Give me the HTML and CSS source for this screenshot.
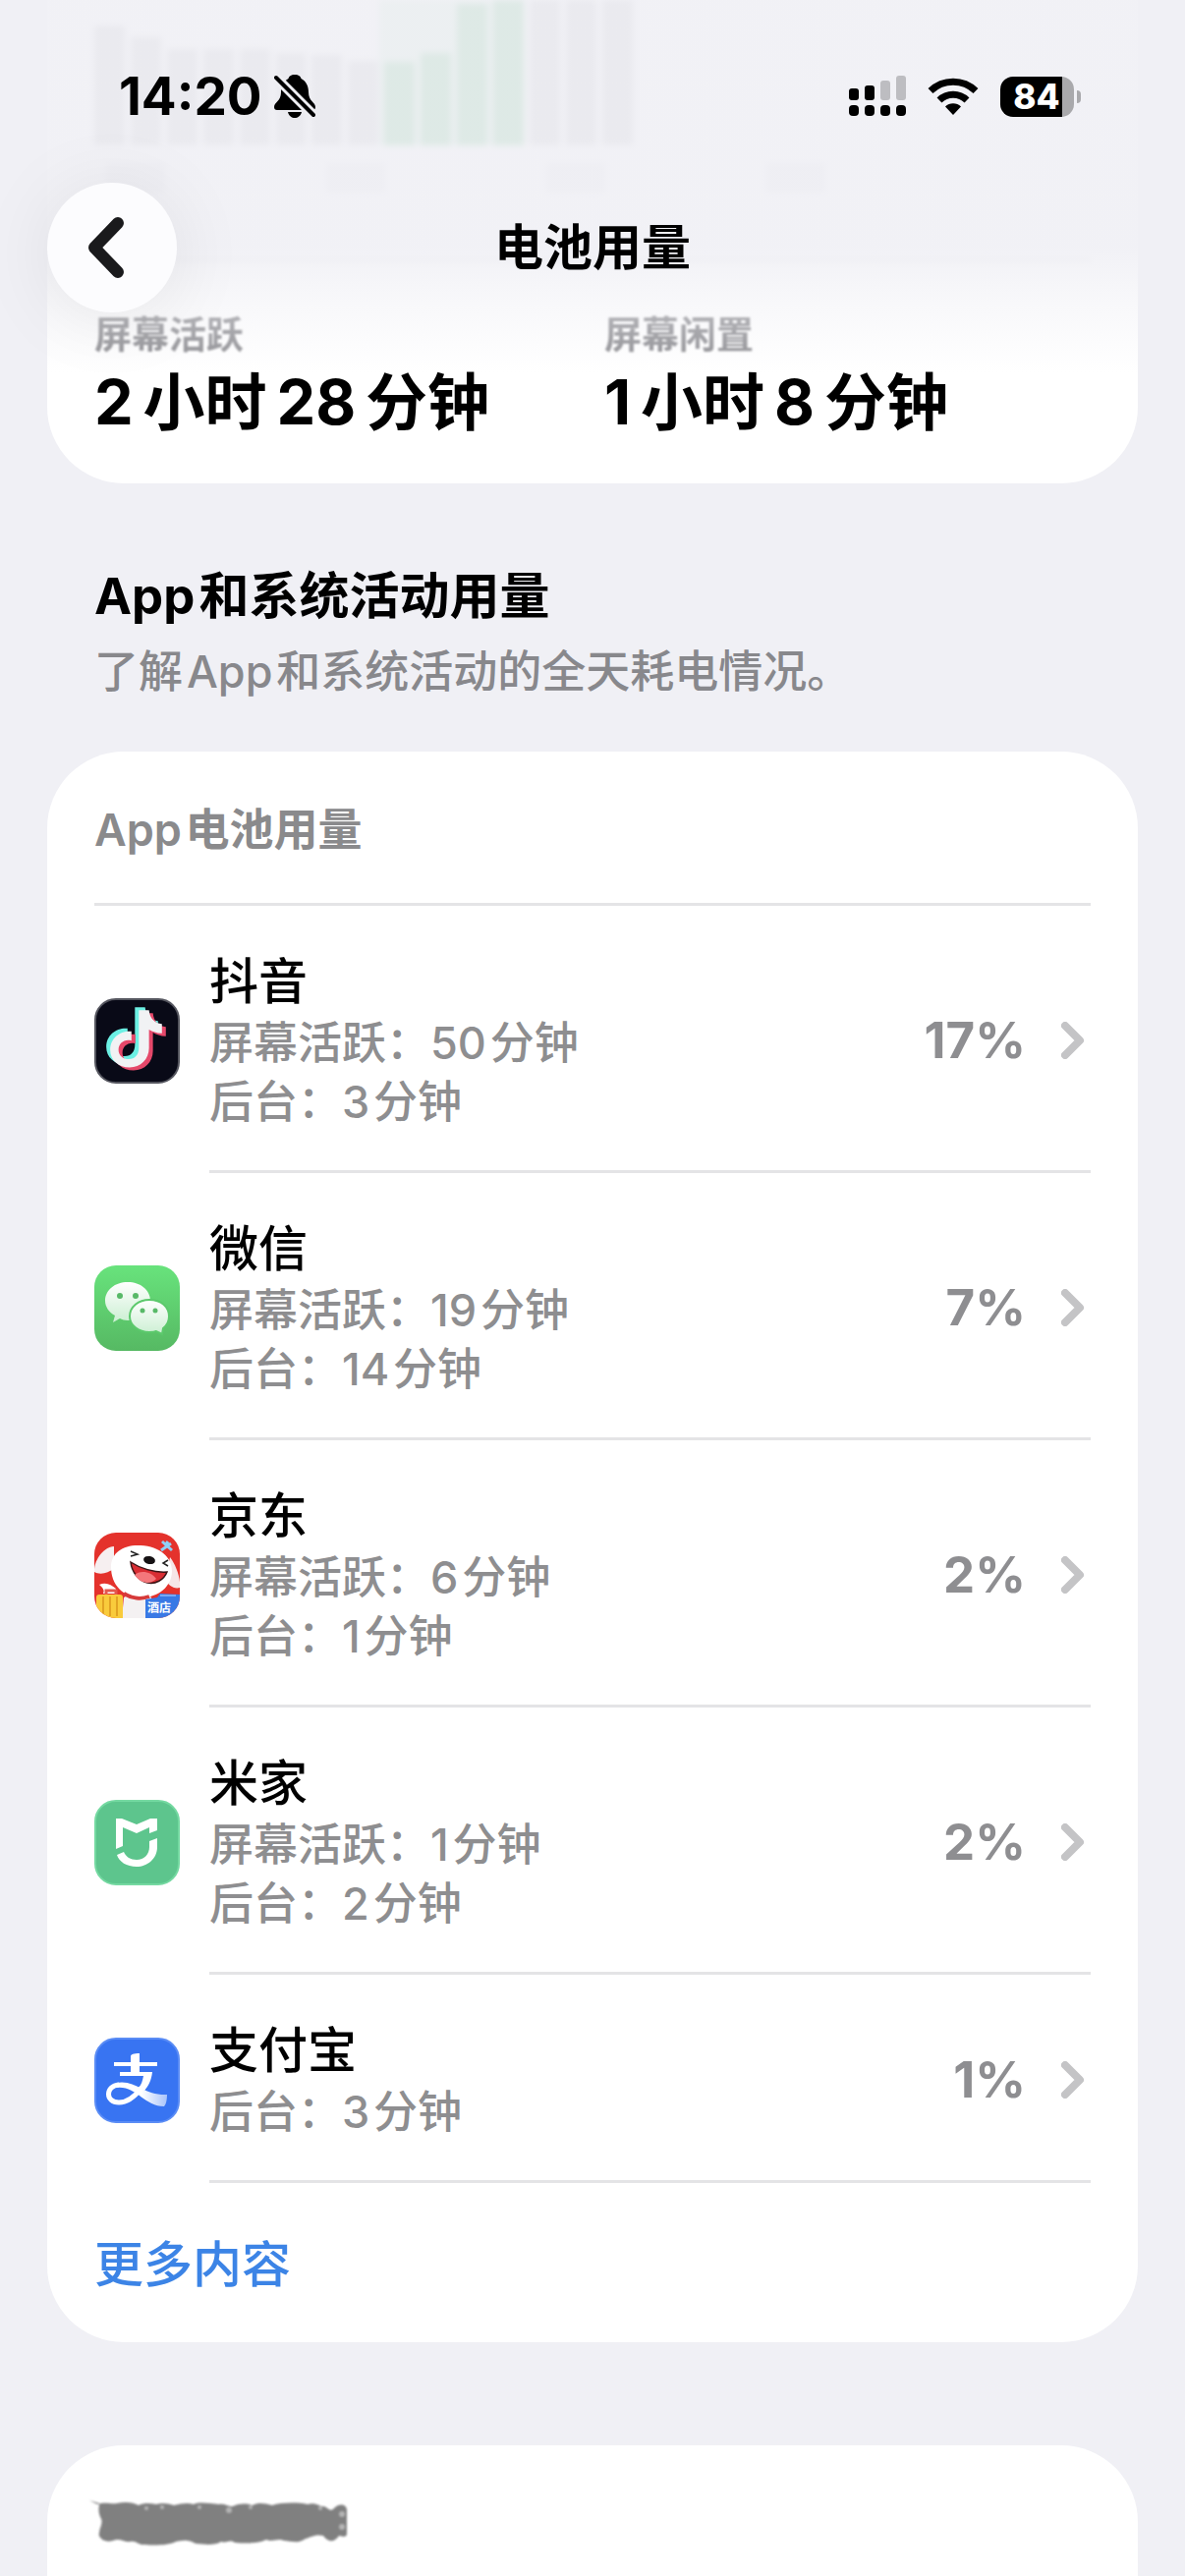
FILE: index.html
```html
<!DOCTYPE html>
<html lang="zh-CN">
<head>
    <meta charset="UTF-8">
    <meta name="viewport" content="width=device-width, initial-scale=1.0">
    <title>电池用量</title>
    <link rel="stylesheet" href="styles.css">
</head>
<body>
    <header class="top-bar">
        <div class="status-bar">
            <div class="status-left">
                <span class="clock">14:20</span>
                <svg class="bell" width="42" height="44" viewBox="0 0 42 44">
                    <path d="M21 0c-4 0-6 2-6.500 4C9 7 7 12 7 18c0 9-7 10-7 15 0 2 1 3 3 3h36c2 0 3-1 3-3 0-5-7-6-7-15 0-6-2-11-7.500-14C27 2 25 0 21 0zM14 38h14c-1 4-4 6-7 6s-6-2-7-6z"/>
                    <path d="M2 3l38 38" stroke="#efeff3" stroke-width="10"/>
                    <path d="M2 3l38 38" stroke="#000" stroke-width="4" stroke-linecap="round"/>
                </svg>
            </div>
            <div class="status-right">
                <svg width="58" height="42" viewBox="0 0 58 42">
                    <g fill="#bdbdc1">
                        <rect x="32" y="5" width="10" height="20" rx="3"/>
                        <rect x="48" y="0" width="10" height="25" rx="3"/>
                    </g>
                    <rect x="0" y="13" width="10" height="12" rx="3"/>
                    <rect x="16" y="10" width="10" height="15" rx="3"/>
                    <rect x="0" y="30" width="10" height="11" rx="4"/>
                    <rect x="16" y="30" width="10" height="11" rx="4"/>
                    <rect x="32" y="30" width="10" height="11" rx="4"/>
                    <rect x="48" y="30" width="10" height="11" rx="4"/>
                </svg>
                <svg width="52" height="38" viewBox="0 0 52 38">
                    <g fill="none" stroke="#000" stroke-width="7">
                        <path d="M3 13.500a33 33 0 0 1 46 0"/>
                        <path d="M12 23a20 20 0 0 1 28 0"/>
                    </g>
                    <path d="M26 38l-8-8.500a11.500 11.500 0 0 1 16 0z"/>
                </svg>
                <div class="battery"><span class="battery-level">84</span></div>
            </div>
        </div>
        <div class="nav">
            <button class="back" type="button" aria-label="返回">
                <svg width="38" height="62" viewBox="0 0 38 62" fill="none" stroke="#1a1a1c" stroke-width="12" stroke-linecap="round" stroke-linejoin="round">
                    <path d="M31 6L7 31l24 25"/>
                </svg>
            </button>
            <h1 class="nav-title">电池用量</h1>
        </div>
    </header>

    <main class="page">
        <section class="card summary">
            <div class="chart">
                <div class="bars">
                    <i style="height: 122px"></i>
                    <i style="height: 110px"></i>
                    <i style="height: 98px"></i>
                    <i style="height: 98px"></i>
                    <i style="height: 98px"></i>
                    <i style="height: 94px"></i>
                    <i style="height: 92px"></i>
                    <i style="height: 86px"></i>
                    <i class="on" style="height: 85px"></i>
                    <i class="on" style="height: 94px"></i>
                    <i class="on" style="height: 144px"></i>
                    <i class="on" style="height: 148px"></i>
                    <i style="height: 148px"></i>
                    <i style="height: 148px"></i>
                    <i style="height: 148px"></i>
                </div>
                <div class="ticks"><b></b><b></b><b></b><b></b></div>
            </div>
            <dl class="stats">
                <div>
                    <dt>屏幕活跃</dt>
                    <dd>2&thinsp;小时&thinsp;28&thinsp;分钟</dd>
                </div>
                <div>
                    <dt>屏幕闲置</dt>
                    <dd>1&thinsp;小时&thinsp;8&thinsp;分钟</dd>
                </div>
            </dl>
        </section>

        <div class="section-head">
            <h2>App&hairsp;和系统活动用量</h2>
            <p>了解&hairsp;App&hairsp;和系统活动的全天耗电情况。</p>
        </div>

        <section class="card">
            <h3 class="card-title">App&hairsp;电池用量</h3>
            <ul class="app-list">
                <li>
                    <a class="app" href="#douyin">
                        <svg class="app-icon" viewBox="0 0 87 87">
                            <defs>
                                <path id="note" d="M37 36v10c-8-2-14 3-14 10 0 6 5 10 11 10 7 0 11-5 11-12V13h11c1 9 6 14 14 15v10c-6 0-10-2-14-4v20c0 12-9 21-21 21S14 67 14 56c0-13 11-21 23-20z" transform="translate(3 -1) scale(.94)"/>
                            </defs>
                            <rect x="1" y="1" width="85" height="85" rx="21" fill="#090a17" stroke="#55565f" stroke-width="2"/>
                            <use href="#note" x="-4" y="-2" fill="#6cf0e4"/>
                            <use href="#note" x="4" y="4" fill="#e5486a"/>
                            <use href="#note" y="1" fill="#f1f2f4"/>
                        </svg>
                        <span class="app-info">
                            <span class="app-name">抖音</span>
                            <span class="app-time">屏幕活跃：50&hairsp;分钟</span>
                            <span class="app-time">后台：3&hairsp;分钟</span>
                        </span>
                        <span class="percent">17%</span>
                        <svg class="chevron" viewBox="0 0 24 38"><path d="M4 4l15 15L4 34"/></svg>
                    </a>
                </li>
                <li>
                    <a class="app" href="#wechat">
                        <svg class="app-icon" viewBox="0 0 87 87">
                            <defs>
                                <linearGradient id="green" x2="0" y2="1">
                                    <stop offset="0" stop-color="#68e37c"/>
                                    <stop offset="1" stop-color="#56b963"/>
                                </linearGradient>
                                <linearGradient id="bubble" x2="0" y2="1">
                                    <stop offset="0" stop-color="#ffffff"/>
                                    <stop offset="1" stop-color="#cbefd2"/>
                                </linearGradient>
                            </defs>
                            <rect width="87" height="87" rx="22" fill="url(#green)"/>
                            <path d="M34 17c13 0 23 8 23 19s-10 20-23 20c-3 0-6-1-8-2l-7 4 2-7c-6-3-10-9-10-15 0-11 10-19 23-19z" fill="url(#bubble)"/>
                            <path d="M56 35c12 0 20 7 20 17 0 5-2 9-6 12l-1 6-6-3c-2 1-5 1-7 1-11 0-20-7-20-16 0-10 9-17 20-17z" fill="url(#bubble)" stroke="#5cc96c" stroke-width="2"/>
                            <g fill="#58b968">
                                <circle cx="26" cy="31" r="3"/>
                                <circle cx="42" cy="31" r="3"/>
                                <circle cx="49" cy="46" r="2.500"/>
                                <circle cx="62" cy="46" r="2.500"/>
                            </g>
                        </svg>
                        <span class="app-info">
                            <span class="app-name">微信</span>
                            <span class="app-time">屏幕活跃：19&hairsp;分钟</span>
                            <span class="app-time">后台：14&hairsp;分钟</span>
                        </span>
                        <span class="percent">7%</span>
                        <svg class="chevron" viewBox="0 0 24 38"><path d="M4 4l15 15L4 34"/></svg>
                    </a>
                </li>
                <li>
                    <a class="app" href="#jd">
                        <svg class="app-icon" viewBox="0 0 87 87">
                            <defs>
                                <clipPath id="tile"><rect width="87" height="87" rx="22"/></clipPath>
                            </defs>
                            <g clip-path="url(#tile)">
                                <rect width="87" height="87" fill="#e4322c"/>
                                <path d="M30 66c8-5 22-5 28 0l3 21H28z" fill="#f4f1f2"/>
                                <path d="M20 14C8 15-1 30 0 40c5 3 14 2 20-4z" fill="#f6eff0"/>
                                <path d="M77 25c6 8 11 21 10 31-6 2-13-3-14-9z" fill="#f6e6e7"/>
                                <path d="M17 35c0-15 13-23 30-22 20 1 32 12 32 26 0 16-14 27-31 27-19 0-31-13-31-31z" fill="#fff"/>
                                <path d="M30 62c8 5 18 6 26 3" fill="none" stroke="#d63a3a" stroke-width="4"/>
                                <path d="M37 30c9 6 24 11 37 10-3 8-12 13-20 11-9-2-16-11-17-21z" fill="#d92d33" stroke="#3b1416" stroke-width="1.500"/>
                                <path d="M41 43c5-5 17-4 22 4-7 7-17 4-22-4z" fill="#f4777b"/>
                                <ellipse cx="56" cy="28" rx="6" ry="4" fill="#161214" transform="rotate(12 56 28)"/>
                                <path d="M37 19l7 3-7 2M75 28l-5 3 5 3" fill="none" stroke="#222" stroke-width="1.500"/>
                                <path d="M69 9l10 9M68 18l10-7M72 13l3-4" stroke="#8fd0f7" stroke-width="3"/>
                                <path d="M5 53c7-3 12 0 17 4l-1 5H9c2-4-1-6-4-9z" fill="#fff"/>
                                <path d="M12 64v-5h10v5" fill="none" stroke="#e4574e" stroke-width="3"/>
                                <rect x="2" y="63" width="27" height="26" rx="3" fill="#f9cb3c"/>
                                <path d="M9 65v20M16 65v20M23 65v20" stroke="#e2a324" stroke-width="2"/>
                                <path d="M52 68l12-2 3-4 20 1v24H52z" fill="#3979e5"/>
                                <path d="M67 64h16" stroke="#76a9f5" stroke-width="2"/>
                                <text class="hotel" x="54" y="81">酒店</text>
                            </g>
                        </svg>
                        <span class="app-info">
                            <span class="app-name">京东</span>
                            <span class="app-time">屏幕活跃：6&hairsp;分钟</span>
                            <span class="app-time">后台：1&hairsp;分钟</span>
                        </span>
                        <span class="percent">2%</span>
                        <svg class="chevron" viewBox="0 0 24 38"><path d="M4 4l15 15L4 34"/></svg>
                    </a>
                </li>
                <li>
                    <a class="app" href="#mihome">
                        <svg class="app-icon" viewBox="0 0 87 87">
                            <rect x="1" y="1" width="85" height="85" rx="21" fill="#5dc58d" stroke="#74d9a1" stroke-width="2"/>
                            <path d="M22 19h6l15 6 14-6h7v12l-8 3v-6l-13 6-14-6v19l-7 3z" fill="#fff"/>
                            <path d="M64 39v9c0 12-10 20-21 20-10 0-18-5-20-12l7-3c2 5 7 8 13 8 8 0 13-6 13-13v-6z" fill="#fff"/>
                        </svg>
                        <span class="app-info">
                            <span class="app-name">米家</span>
                            <span class="app-time">屏幕活跃：1&hairsp;分钟</span>
                            <span class="app-time">后台：2&hairsp;分钟</span>
                        </span>
                        <span class="percent">2%</span>
                        <svg class="chevron" viewBox="0 0 24 38"><path d="M4 4l15 15L4 34"/></svg>
                    </a>
                </li>
                <li>
                    <a class="app" href="#alipay">
                        <svg class="app-icon" viewBox="0 0 87 87">
                            <defs>
                                <linearGradient id="tail">
                                    <stop offset="0" stop-color="#fff"/>
                                    <stop offset=".5" stop-color="#fff"/>
                                    <stop offset="1" stop-color="#a9c4fb"/>
                                </linearGradient>
                            </defs>
                            <rect x="1" y="1" width="85" height="85" rx="21" fill="#3874f2" stroke="#5a8cf5" stroke-width="2"/>
                            <path d="M20 25h17v-6c0-2 3-3 9-3v9h18v4H46v6h13c-1 9-4 14-8 19l-6-3c3-3 4-7 5-12H26v-4h11v-6H20z" fill="#fff"/>
                            <path d="M48 51c-6 8-13 15-23 15-14 0-14-17 0-18" fill="none" stroke="#fff" stroke-width="5"/>
                            <path d="M22 46c20-4 28 13 52 12 0 5-1 10-3 12-20 0-29-22-49-19z" fill="url(#tail)"/>
                        </svg>
                        <span class="app-info">
                            <span class="app-name">支付宝</span>
                            <span class="app-time">后台：3&hairsp;分钟</span>
                        </span>
                        <span class="percent">1%</span>
                        <svg class="chevron" viewBox="0 0 24 38"><path d="M4 4l15 15L4 34"/></svg>
                    </a>
                </li>
            </ul>
            <a class="more" href="#more">更多内容</a>
        </section>

        <section class="card next-card">
            <svg class="scribble" width="264" height="52" viewBox="13 0 264 52">
                <path d="M8 2l8 4c8-3 14 0 20-1 9-2 16-1 22 2 6-3 12-2 18-1 6-2 12-1 18 1 8-2 14-3 20-1 6-3 16-1 26 0 6-1 10 3 14 2 8-3 12-3 20-1 6-3 12-2 20 0 10-3 26-3 36-1 6-2 10 0 14 2 6-1 8 6 12 3 6-7 14-5 14 1v24c0 4-5 3-8 2-4 6-10 8-16 0-8-2-14 2-18 3-8 6-16 2-22 2-6-3-12 2-18-1-8 4-20 4-32 3-6-4-8 1-14-1-6 4-16 3-26 2-8-5-14-3-20-2-8 4-22 4-32 3-6 1-8-4-14-3-8 1-10-4-18-1-8 3-16-3-14-8 0-4 4-10 2-14-4-8-2-12-2-16z" fill="#808080"/>
                <g fill="#b5b5b5">
                    <circle cx="66" cy="10" r="2"/>
                    <circle cx="82" cy="9" r="2"/>
                    <circle cx="120" cy="9" r="2"/>
                    <circle cx="150" cy="12" r="3"/>
                    <circle cx="172" cy="9" r="2"/>
                    <circle cx="243" cy="10" r="2"/>
                    <circle cx="265" cy="16" r="3"/>
                    <circle cx="265" cy="29" r="3"/>
                </g>
            </svg>
        </section>
    </main>
</body>
</html>
```
FILE: styles.css
```css
* {
    box-sizing: border-box;
    margin: 0;
    padding: 0;
}

body {
    position: relative;
    height: 100vh;
    overflow: hidden;
    background: #f0f0f5;
    color: #000;
    font-family: Inter, 'Noto Sans CJK SC', sans-serif;
    font-size: 45px;
    line-height: 60px;
}

a {
    color: inherit;
    text-decoration: none;
}

/* 顶部栏，盖在滚动内容上 */
.top-bar {
    position: absolute;
    top: 0;
    left: 0;
    right: 0;
    z-index: 1;
    height: 380px;
    padding: 68px 48px 0;
    background: linear-gradient(rgba(240, 240, 245, 0.92) 66%, rgba(240, 240, 245, 0.5) 80%, rgba(240, 240, 245, 0));
}

.status-bar {
    display: flex;
    justify-content: space-between;
    align-items: center;
    height: 60px;
    padding: 0 65px 0 73px;
}

.status-left,
.status-right {
    display: flex;
    align-items: center;
}

.status-left {
    gap: 12px;
}

.status-right {
    gap: 22px;
}

.clock {
    font-size: 53px;
    font-weight: 700;
}

.battery {
    position: relative;
    width: 75px;
    height: 41px;
    border-radius: 13px;
    background: linear-gradient(to right, #000 84%, #a9a9ac 84%);
}

.battery::after {
    content: '';
    position: absolute;
    top: 14px;
    right: -7px;
    width: 4px;
    height: 13px;
    border-radius: 0 6px 6px 0;
    background: #a9a9ac;
}

.battery-level {
    display: block;
    padding-right: 1px;
    color: #fff;
    font-size: 35px;
    font-weight: 800;
    line-height: 41px;
    text-align: center;
}

.nav {
    display: grid;
    grid-template-columns: 132px 1fr 132px;
    align-items: center;
    margin-top: 58px;
}

.back {
    display: flex;
    justify-content: center;
    align-items: center;
    width: 132px;
    height: 132px;
    padding-right: 12px;
    border: 0;
    border-radius: 50%;
    background: #fcfcfe;
    box-shadow: 0 6px 80px rgba(0, 0, 0, 0.08);
}

.nav-title {
    font-size: 50px;
    font-weight: 700;
    text-align: center;
}

.page {
    display: flex;
    flex-direction: column;
    min-height: 100vh;
    padding: 0 48px;
}

.card {
    padding: 0 48px;
    border-radius: 78px;
    background: #fff;
}

.summary {
    border-radius: 0 0 78px 78px;
    padding-bottom: 39px;
}

/* 图表只露出底部一截 */
.chart {
    height: 266px;
    border-bottom: 3px solid #e4e4e6;
    filter: blur(3px);
}

.bars {
    display: flex;
    align-items: flex-end;
    gap: 6px;
    width: 54%;
    height: 148px;
    background: linear-gradient(to right, transparent 53%, rgba(90, 200, 120, 0.4) 53%, rgba(90, 200, 120, 0.4) 80%, transparent 80%);
}

.bars i {
    flex: 1;
    background: #a4a4a8;
}

.bars .on {
    background: #0a9c34;
}

.ticks {
    display: flex;
    gap: 164px;
    padding: 18px 12px;
}

.ticks b {
    width: 60px;
    height: 30px;
    background: #dcdce0;
}

.stats {
    display: grid;
    grid-template-columns: 1fr 1fr;
    gap: 24px;
    padding-top: 49px;
}

.stats dt {
    color: #8a8a8e;
    font-size: 38px;
    font-weight: 600;
    line-height: 50px;
    filter: blur(1px);
}

.stats dd {
    font-size: 63px;
    font-weight: 700;
    line-height: 88px;
}

.section-head {
    padding: 79px 48px 45px;
    line-height: 72px;
}

.section-head h2 {
    margin-bottom: 5px;
    font-size: 51px;
    font-weight: 700;
}

.section-head p {
    color: #88888c;
    font-weight: 500;
}

.card-title {
    padding: 47px 0 41px;
    border-bottom: 3px solid #e4e4e6;
    color: #8a8a8c;
    font-size: 45px;
    font-weight: 600;
    line-height: 66px;
}

.app-list {
    list-style: none;
}

.app {
    position: relative;
    display: flex;
    align-items: center;
    gap: 30px;
    padding: 44px 0 42px;
}

.app::after {
    content: '';
    position: absolute;
    left: 117px;
    right: 0;
    bottom: 0;
    height: 3px;
    background: #e4e4e6;
}

.app-icon {
    width: 87px;
    height: 87px;
}

.app-info {
    flex: 1;
    display: flex;
    flex-direction: column;
}

.app-name {
    font-size: 50px;
    font-weight: 500;
    line-height: 66px;
}

.app-time {
    color: #8e8e90;
    font-weight: 500;
}

.percent {
    color: #8e8e91;
    font-size: 51px;
    font-weight: 700;
}

.chevron {
    width: 24px;
    height: 38px;
    margin: 0 6px;
    fill: none;
    stroke: #c4c4c6;
    stroke-width: 8px;
    stroke-linecap: round;
    stroke-linejoin: round;
}

.hotel {
    fill: #fff;
    font-size: 12px;
    font-weight: 700;
}

.more {
    display: block;
    padding: 50px 0 46px;
    color: #3c84e6;
    font-size: 50px;
    font-weight: 500;
    line-height: 66px;
}

.next-card {
    flex: 1;
    margin-top: 105px;
    padding-top: 54px;
    border-radius: 78px 78px 0 0;
}

.scribble {
    display: block;
    overflow: visible;
    filter: blur(1px);
}
```
